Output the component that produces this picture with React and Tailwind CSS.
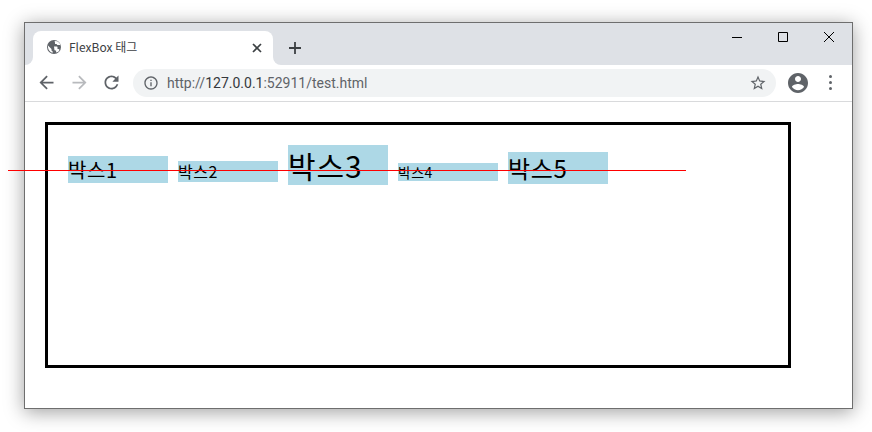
const ICONS = {
  back: 'M20 11H7.83l5.59-5.59L12 4l-8 8 8 8 1.41-1.41L7.83 13H20v-2z',
  forward: 'M12 4l-1.41 1.41L16.17 11H4v2h12.17l-5.58 5.59L12 20l8-8z',
  reload: 'M17.65 6.35C16.2 4.9 14.21 4 12 4c-4.42 0-7.99 3.58-7.99 8s3.57 8 7.99 8c3.73 0 6.84-2.55 7.73-6h-2.08c-.82 2.33-3.04 4-5.65 4-3.31 0-6-2.69-6-6s2.69-6 6-6c1.66 0 3.14.69 4.22 1.78L13 11h7V4l-2.35 2.35z',
  info: 'M11 7h2v2h-2zm0 4h2v6h-2zm1-9C6.48 2 2 6.48 2 12s4.48 10 10 10 10-4.48 10-10S17.52 2 12 2zm0 18c-4.41 0-8-3.59-8-8s3.59-8 8-8 8 3.59 8 8-3.59 8-8 8z',
  star: 'M22 9.24l-7.19-.62L12 2 9.19 8.63 2 9.24l5.46 4.73L5.82 21 12 17.27 18.18 21l-1.63-7.03L22 9.24zM12 15.4l-3.76 2.27 1-4.28-3.32-2.88 4.38-.38L12 6.1l1.71 4.04 4.38.38-3.32 2.88 1 4.28L12 15.4z',
  account: 'M12 2C6.48 2 2 6.48 2 12s4.48 10 10 10 10-4.48 10-10S17.52 2 12 2zm0 3c1.66 0 3 1.34 3 3s-1.34 3-3 3-3-1.34-3-3 1.34-3 3-3zm0 14.2c-2.5 0-4.71-1.28-6-3.22.03-1.99 4-3.08 6-3.08 1.99 0 5.97 1.09 6 3.08-1.29 1.94-3.5 3.22-6 3.22z',
};

function Icon({ name, className }) {
  return (
    <svg viewBox="0 0 24 24" className={className} fill="currentColor">
      <path d={ICONS[name]} />
    </svg>
  );
}

// solid globe with the land cut out in white
function Globe({ className }) {
  return (
    <svg viewBox="0 0 16 16" className={className}>
      <circle cx="8" cy="8" r="7" fill="#5f6368" />
      <path d="M2 6.5l3.500 3.600v.9c0 .8.500 1.300 1.200 1.300v1.500C4 13.400 2.200 10.800 2 8.200zM8.600 2.100l2.600.2c1.600.7 2.800 2 3.200 3.600h-3l-.9-.9H9V3.800z" fill="#fff" />
      <path d="M8 7.400h2.800c.4 0 .7.3.7.7v2h.8c.6 0 1 .4 1.200 1l-1.200 1.600-2.200.8v-1.900H9.200c-.5 0-.8-.3-.8-.8z" fill="#fff" />
    </svg>
  );
}

function Box({ className, children }) {
  return <div className={`mr-2.5 w-[100px] bg-[#add8e6] text-black tracking-[0.03em] ${className}`}>{children}</div>;
}

export default function App() {
  return (
    <div className="relative h-[432px] w-[872px] overflow-hidden bg-white pl-6 pt-[22px] font-['Noto_Sans_CJK_KR','Noto_Sans',sans-serif]">
      <div className="h-[387px] w-[829px] border border-[#6e6e6e] bg-white shadow-[0_3px_18px_rgba(0,0,0,0.38)]">
        {/* tab strip */}
        <div className="flex h-[42px] bg-[#dee1e6]">
          <div className="relative ml-2 mt-2 flex h-[34px] w-[240px] items-center rounded-t-lg bg-white pl-[13px] pr-[11px]">
            <span className="absolute -left-2 bottom-0 h-2 w-2 bg-white">
              <span className="block h-2 w-2 rounded-br-lg bg-[#dee1e6]" />
            </span>
            <span className="absolute -right-2 bottom-0 h-2 w-2 bg-white">
              <span className="block h-2 w-2 rounded-bl-lg bg-[#dee1e6]" />
            </span>
            <Globe className="mb-0.5 h-4 w-4" />
            <span className="mb-0.5 ml-[7px] text-xs leading-4 text-[#3c4043]">FlexBox 태그</span>
            <svg viewBox="0 0 10 10" className="ml-auto h-[10px] w-[10px] text-[#3c4043]" fill="none" stroke="currentColor" strokeWidth="1.7">
              <path d="M1 1l8 8M9 1l-8 8" />
            </svg>
          </div>
          <svg viewBox="0 0 12 12" className="ml-4 mt-[19px] h-3 w-3 text-[#3c4043]" fill="none" stroke="currentColor" strokeWidth="1.8">
            <path d="M6 0v12M0 6h12" />
          </svg>
          <div className="ml-auto flex items-start">
            <svg viewBox="0 0 10 10" className="mr-9 mt-[9px] h-[10px] w-[10px]" fill="none" stroke="#000" strokeWidth="1">
              <path d="M0 5.5h10" />
            </svg>
            <svg viewBox="0 0 10 10" className="mr-9 mt-[9px] h-[10px] w-[10px]" fill="none" stroke="#000" strokeWidth="1">
              <path d="M.5.5h9v9h-9z" />
            </svg>
            <svg viewBox="0 0 10 10" className="mr-[18px] mt-[9px] h-[10px] w-[10px]" fill="none" stroke="#000" strokeWidth="1">
              <path d="M0 0l10 10M10 0L0 10" />
            </svg>
          </div>
        </div>

        {/* toolbar */}
        <div className="flex h-[37px] items-center border-b border-[#d9dadc] bg-white pb-px">
          <Icon name="back" className="ml-[11px] h-[21px] w-[21px] text-[#5f6368]" />
          <Icon name="forward" className="ml-3 h-[21px] w-[21px] text-[#b8babd]" />
          <Icon name="reload" className="ml-[11px] h-[21px] w-[21px] text-[#5f6368]" />
          <div className="ml-[11px] flex h-7 w-[643px] items-center rounded-full bg-[#f1f3f4] pl-[10px] pr-[9px]">
            <Icon name="info" className="h-4 w-4 text-[#5f6368]" />
            <span className="ml-[8px] text-sm leading-5 text-[#5f6368] font-['Roboto','Noto_Sans',sans-serif]">
              http://<span className="text-[#35383c]">127.0.0.1</span>:52911/test.html
            </span>
            <Icon name="star" className="ml-auto h-[18px] w-[18px] text-[#5f6368]" />
          </div>
          <Icon name="account" className="ml-[10px] h-6 w-6 text-[#5f6368]" />
          <div className="ml-[19px] flex flex-col gap-[3px]">
            <span className="h-[3px] w-[3px] rounded-full bg-[#5f6368]" />
            <span className="h-[3px] w-[3px] rounded-full bg-[#5f6368]" />
            <span className="h-[3px] w-[3px] rounded-full bg-[#5f6368]" />
          </div>
        </div>

        {/* page */}
        <div className="p-5">
          <div className="flex h-[246px] w-[746px] items-baseline border-[3px] border-black p-5">
            <Box className="text-[20px] leading-[27px]">박스1</Box>
            <Box className="text-[16px] leading-[21px]">박스2</Box>
            <Box className="text-[30px] leading-[40px]">박스3</Box>
            <Box className="text-[14px] leading-[18px]">박스4</Box>
            <Box className="text-[24px] leading-[32px]">박스5</Box>
          </div>
        </div>
      </div>

      {/* baseline guide */}
      <div className="absolute left-2 top-[170px] h-px w-[678px] bg-[#ff0000]" />
    </div>
  );
}
